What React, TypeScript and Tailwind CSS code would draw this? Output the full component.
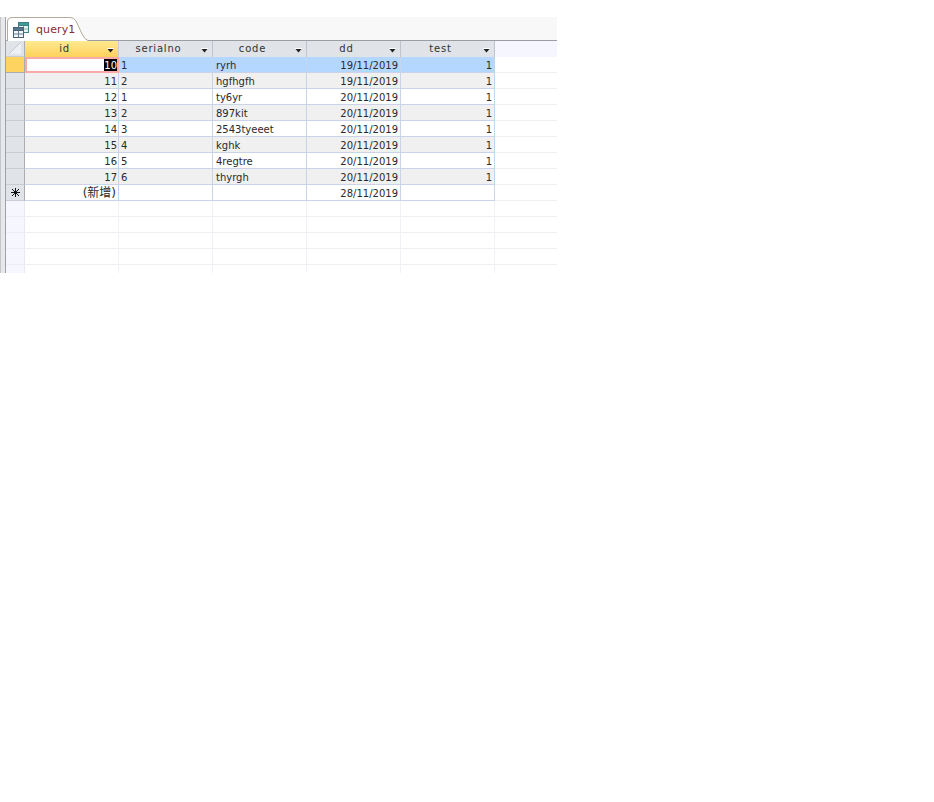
const rows = [
  { id: "10", serial: "1", code: "ryrh", dd: "19/11/2019", test: "1" },
  { id: "11", serial: "2", code: "hgfhgfh", dd: "19/11/2019", test: "1" },
  { id: "12", serial: "1", code: "ty6yr", dd: "20/11/2019", test: "1" },
  { id: "13", serial: "2", code: "897kit", dd: "20/11/2019", test: "1" },
  { id: "14", serial: "3", code: "2543tyeeet", dd: "20/11/2019", test: "1" },
  { id: "15", serial: "4", code: "kghk", dd: "20/11/2019", test: "1" },
  { id: "16", serial: "5", code: "4regtre", dd: "20/11/2019", test: "1" },
  { id: "17", serial: "6", code: "thyrgh", dd: "20/11/2019", test: "1" },
];

const headers = ["id", "serialno", "code", "dd", "test"];

function SortArrow() {
  return (
    <svg width="7" height="5" viewBox="0 0 7 5" className="absolute right-[4px] top-[7px]">
      <rect x="0" y="0" width="7" height="1" fill="#fff" />
      <path d="M0.5 1H6.5L3.5 4.5Z" fill="#222" />
    </svg>
  );
}

function TableIcon() {
  return (
    <svg width="16" height="16" viewBox="0 0 16 16">
      <rect x="5.5" y="0.5" width="10" height="10" fill="#e8f1f1" stroke="#3f7f84" />
      <rect x="5.5" y="0.5" width="10" height="3" fill="#3f9a9a" stroke="#3f7f84" />
      <path d="M10.5 4V10M6 7H15" stroke="#8fb6b8" />
      <rect x="0.5" y="5.5" width="10" height="10" fill="#f4f7fa" stroke="#4a6275" />
      <rect x="0.5" y="5.5" width="10" height="3" fill="#54768f" stroke="#4a6275" />
      <path d="M5.5 9V15M1 12H10" stroke="#5f7c92" />
    </svg>
  );
}

function Tab() {
  return (
    <div className="relative h-[24px] w-[82px] shrink-0">
      <svg width="82" height="24" viewBox="0 0 82 24" className="absolute left-0 top-0">
        <path d="M1.5 24V5Q1.5 0.5 6 0.5H64Q68 0.5 70 4L76 17Q79 23 82 23.5V24Z" fill="#fff" />
        <path d="M1.5 24V5Q1.5 0.5 6 0.5H64Q68 0.5 70 4L76 17Q79 23 82 23.5" fill="none" stroke="#b5ab9a" />
      </svg>
      <div className="relative flex h-full items-center pl-[7px] pt-[1px]">
        <TableIcon />
        <span className="ml-[7px] text-[11px] leading-none tracking-[0.1px] text-[#8b2a2a]">query1</span>
      </div>
    </div>
  );
}

function Header() {
  return (
    <div className="flex h-[16px]">
      <div className="relative h-[16px] w-[19px] shrink-0 border-r border-b border-r-[#a9acb0] border-b-[#c9cdd2] bg-[#e0e3e7]">
        <svg width="12" height="12" viewBox="0 0 12 12" className="absolute left-[3px] top-[1px]">
          <path d="M0 12L12 0V12Z" fill="#eef0f3" />
          <path d="M0 12L12 0" stroke="#c8ccd2" />
        </svg>
      </div>
      {headers.map((h, i) => (
        <div
          key={h}
          className={
            i === 0
              ? "relative h-[16px] w-[94px] shrink-0 border-r border-[#c9ced6] bg-gradient-to-b from-[#ffe98f] to-[#ffd25c] pr-[14px] text-center text-[10px] leading-[16px] tracking-[0.8px] text-[#333]"
              : "relative h-[16px] w-[94px] shrink-0 border-r border-[#bfc4ca] bg-[#e0e3e7] pr-[14px] text-center text-[10px] leading-[16px] tracking-[0.8px] text-[#333]"
          }
        >
          {h}
          <SortArrow />
        </div>
      ))}
      <div className="h-[16px] flex-1 bg-[#f5f6fe]" />
    </div>
  );
}

function DataRow({ r, i }: { r: (typeof rows)[number]; i: number }) {
  const selected = i === 0;
  const bg = selected ? "bg-[#b4d7ff]" : i % 2 === 1 ? "bg-[#f0f0f0]" : "bg-white";
  const cell = "h-[16px] w-[94px] shrink-0 border-r border-b border-[#c9d4e8] px-[2px] text-[10px] leading-[17px] text-[#2a2a2a] " + bg;
  return (
    <div className="flex h-[16px]">
      <div
        className={
          selected
            ? "h-[16px] w-[19px] shrink-0 border-r border-b border-[#a9acb0] bg-[#ffd35f]"
            : "h-[16px] w-[19px] shrink-0 border-r border-b border-r-[#a9acb0] border-b-[#c9cdd2] bg-[#e0e3e7]"
        }
      />
      {selected ? (
        <div className="flex h-[16px] w-[94px] shrink-0 justify-end border-2 border-[#fbaaaa] bg-white text-[10px] leading-[13px]">
          <span className="bg-black text-white">{r.id}</span>
        </div>
      ) : (
        <div className={cell + " pr-[1px] text-right"}>{r.id}</div>
      )}
      <div className={cell}>{r.serial}</div>
      <div className={cell + " pl-[3px]"}>{r.code}</div>
      <div className={cell + " text-right"}>{r.dd}</div>
      <div className={cell + " text-right"}>{r.test}</div>
      <div className="h-[16px] flex-1 border-b border-[#f0f0f2] bg-white" />
    </div>
  );
}

function NewRow() {
  const cell = "h-[16px] w-[94px] shrink-0 border-r border-b border-[#c9d4e8] bg-white text-right text-[10px] leading-[17px] text-[#2a2a2a]";
  return (
    <div className="flex h-[16px]">
      <div className="flex h-[16px] w-[19px] shrink-0 items-center justify-center border-r border-b border-r-[#a9acb0] border-b-[#c9cdd2] bg-[#e0e3e7]">
        <svg width="9" height="9" viewBox="0 0 9 9">
          <path d="M4.5 0V9M0 4.5H9M1 1L8 8M8 1L1 8" stroke="#111" />
        </svg>
      </div>
      <div className={cell + " pr-[2px] text-[12px] leading-[15px]"}>(新增)</div>
      <div className={cell} />
      <div className={cell} />
      <div className={cell + " pr-[2px]"}>28/11/2019</div>
      <div className={cell} />
      <div className="h-[16px] flex-1 border-b border-[#f0f0f2] bg-white" />
    </div>
  );
}

function EmptyRow() {
  return (
    <div className="flex h-[16px] shrink-0">
      <div className="h-[16px] w-[19px] shrink-0 border-r border-b border-r-[#e8eaf2] border-b-[#eeeef2] bg-[#f5f6fe]" />
      {[0, 1, 2, 3, 4].map((c) => (
        <div key={c} className="h-[16px] w-[94px] shrink-0 border-r border-b border-r-[#f0f1f6] border-b-[#f0f0f2]" />
      ))}
      <div className="h-[16px] flex-1 border-b border-[#f0f0f2]" />
    </div>
  );
}

export default function App() {
  return (
    <div className="min-h-[802px] bg-white pt-[17px] font-['DejaVu_Sans','Noto_Sans_CJK_TC',sans-serif]">
      <div className="flex h-[256px] w-[557px] overflow-hidden">
        <div className="h-full w-[6px] shrink-0 border-r border-l border-r-[#9fa2a6] border-l-[#c4c6c9] bg-[#e6e8eb]" />
        <div className="flex min-w-0 flex-1 flex-col">
          <div className="flex h-[24px] shrink-0 border-b border-[#9a9ea3] bg-[#f8f8f8]">
            <Tab />
          </div>
          <Header />
          {rows.map((r, i) => (
            <DataRow key={r.id} r={r} i={i} />
          ))}
          <NewRow />
          <EmptyRow />
          <EmptyRow />
          <EmptyRow />
          <EmptyRow />
          <EmptyRow />
        </div>
      </div>
    </div>
  );
}
